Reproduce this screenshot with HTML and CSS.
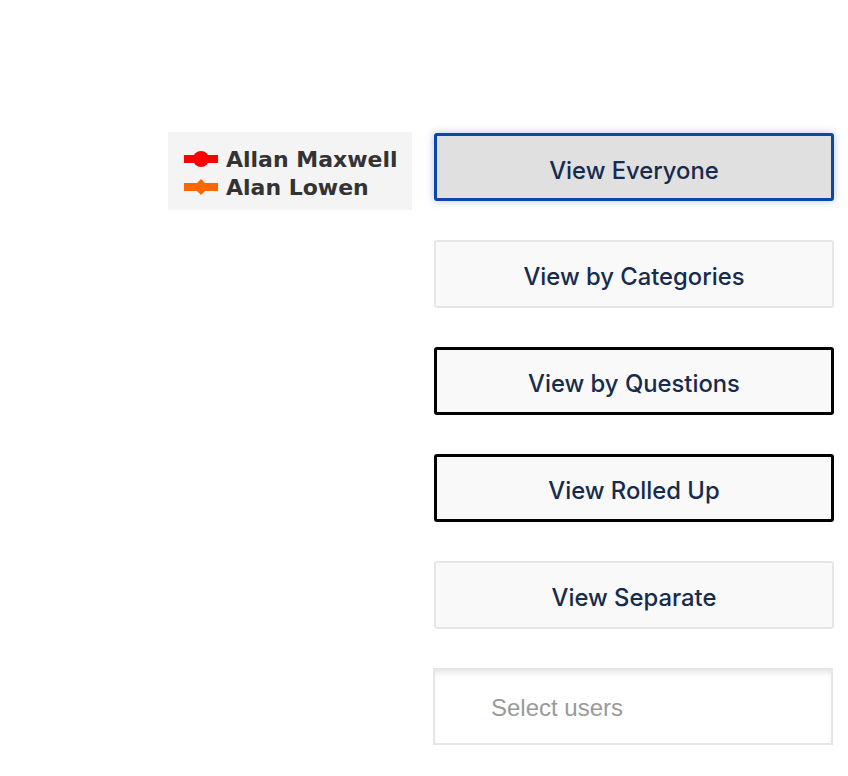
FILE: index.html
```html
<!DOCTYPE html>
<html>
<head>
<meta charset="utf-8">
<link rel="stylesheet" href="styles.css">
</head>
<body>
<div class="page">
  <div class="legend">
    <div class="legend-row">
      <svg class="legend-icon" width="34" height="18" viewBox="0 0 34 18"><rect x="0" y="5" width="34" height="8" fill="#ff0000"/><circle cx="17" cy="9" r="8" fill="#ff0000"/></svg>
      <span class="legend-name">Allan Maxwell</span>
    </div>
    <div class="legend-row">
      <svg class="legend-icon" width="34" height="18" viewBox="0 0 34 18"><rect x="0" y="5" width="34" height="8" fill="#ff6600"/><path d="M17 1 L25 9 L17 17 L9 9 Z" fill="#ff6600"/></svg>
      <span class="legend-name">Alan Lowen</span>
    </div>
  </div>
  <div class="controls">
    <button class="btn btn-active">View Everyone</button>
    <button class="btn">View by Categories</button>
    <button class="btn btn-dark">View by Questions</button>
    <button class="btn btn-dark">View Rolled Up</button>
    <button class="btn">View Separate</button>
    <div class="select">Select users</div>
  </div>
</div>
</body>
</html>
```
FILE: styles.css
```css
html, body {
  margin: 0;
  padding: 0;
  background: #ffffff;
}
.page {
  display: flex;
  align-items: flex-start;
  padding-top: 132px;
  padding-left: 168px;
  gap: 22px;
}
.legend {
  width: 244px;
  height: 78px;
  box-sizing: border-box;
  background: #f4f4f4;
  padding: 13px 0 0 16px;
  display: flex;
  flex-direction: column;
}
.legend-row {
  display: flex;
  align-items: center;
  height: 28px;
  gap: 8px;
}
.legend-icon {
  flex: none;
}
.legend-name {
  font-family: "DejaVu Sans", sans-serif;
  font-weight: bold;
  font-size: 22px;
  color: #333333;
}
.controls {
  display: flex;
  flex-direction: column;
  gap: 39px;
  margin-top: 1px;
}
.btn {
  width: 400px;
  height: 68px;
  box-sizing: border-box;
  background: #f9f9f9;
  border: 2px solid #e6e6e6;
  border-radius: 3px;
  font-family: Inter, "Open Sans", sans-serif;
  font-weight: 500;
  font-size: 23.8px;
  color: #172b4d;
  padding: 5px 0 0 0;
  margin: 0;
}
.btn-active {
  background: #e0e0e0;
  border: 3px solid #0a47a9;
  box-shadow: 0 0 8px rgba(10, 71, 169, 0.3);
  padding-top: 7px;
}
.btn-dark {
  border: 3px solid #000000;
}
.select {
  width: 400px;
  height: 77px;
  box-sizing: border-box;
  margin-left: -1px;
  border: 2px solid #e6e6e6;
  box-shadow: inset 0 5px 6px -3px rgba(0, 0, 0, 0.12);
  display: flex;
  align-items: center;
  padding: 2px 0 0 56px;
  font-family: "Liberation Sans", Arial, sans-serif;
  font-size: 24px;
  color: #999999;
}
```
